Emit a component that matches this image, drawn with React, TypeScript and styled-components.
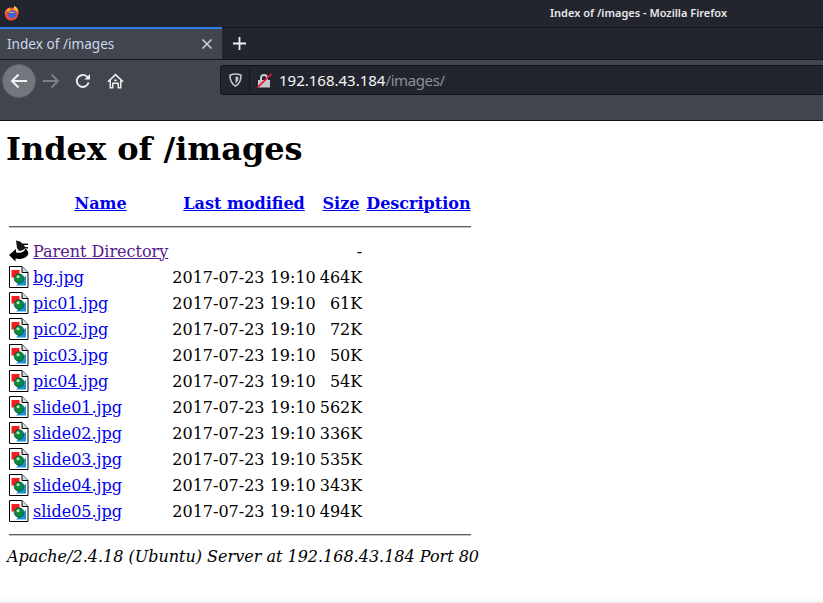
import React from "react";
import styled, { createGlobalStyle } from "styled-components";

const GlobalStyle = createGlobalStyle`
  html, body {
    margin: 0;
    padding: 0;
    height: 100%;
    background: #fff;
  }
  #root {
    height: 100%;
  }
`;

const UI_FONT = `"Noto Sans", "Open Sans", sans-serif`;
const PAGE_FONT = `"DejaVu Serif", serif`;

const Window = styled.div`
  width: 823px;
  height: 603px;
  display: flex;
  flex-direction: column;
  overflow: hidden;
  position: relative;
`;

const TitleBar = styled.div`
  height: 27px;
  background: #23252e;
  display: flex;
  align-items: center;
  padding-left: 4px;
  position: relative;
  flex: none;
`;

const WindowTitle = styled.div`
  position: absolute;
  left: 550px;
  top: 5px;
  font: 600 11px/16px ${UI_FONT};
  color: #e8e8ea;
  white-space: nowrap;
`;

const TabStrip = styled.div`
  height: 33px;
  background: #23252e;
  display: flex;
  flex: none;
  border-bottom: 1px solid #14151a;
  box-sizing: border-box;
  border-top: 1px solid #14151a;
`;

const ActiveTab = styled.div`
  width: 222px;
  height: 32px;
  margin-top: -1px;
  background: #42454e;
  border-top: 2px solid #2d7be8;
  box-sizing: border-box;
  display: flex;
  align-items: center;
  justify-content: space-between;
  padding: 0 9px 0 7px;
  font: 400 13.6px/20px ${UI_FONT};
  color: #c9d8ea;
  z-index: 1;
`;

const NewTab = styled.div`
  width: 34px;
  display: flex;
  align-items: center;
  justify-content: center;
`;

const NavBar = styled.div`
  height: 61px;
  background: #42454e;
  border-bottom: 1px solid #101114;
  box-sizing: border-box;
  flex: none;
  display: flex;
  align-items: flex-start;
  padding: 4px 0 0 2px;
`;

const NavButton = styled.div<{ $active?: boolean }>`
  width: 32px;
  height: 32px;
  border-radius: 50%;
  background: ${(p) => (p.$active ? "#73767c" : "transparent")};
  border: 1px solid ${(p) => (p.$active ? "#5c5f66" : "transparent")};
  display: flex;
  align-items: center;
  justify-content: center;
  margin-right: -2px;
`;

const UrlBar = styled.div`
  margin-left: 90px;
  margin-top: 1px;
  flex: 1;
  height: 30px;
  background: #23252e;
  border: 1px solid #14151a;
  border-right: none;
  border-radius: 4px 0 0 4px;
  box-sizing: border-box;
  display: flex;
  align-items: center;
`;

const ShieldSlot = styled.div`
  width: 28px;
  height: 22px;
  display: flex;
  align-items: center;
  justify-content: center;
  border-right: 1px solid #14151a;
`;

const LockSlot = styled.div`
  width: 29px;
  display: flex;
  align-items: center;
  justify-content: center;
`;

const Url = styled.div`
  font: 400 15px/20px ${UI_FONT};
  color: #f4f5f6;
  white-space: nowrap;
`;

const UrlPath = styled.span`
  color: #8d9097;
  letter-spacing: -0.4px;
`;

const Page = styled.main`
  flex: 1;
  background: #fff;
  color: #000;
  padding: 0 7px;
  font: 400 16px/19px ${PAGE_FONT};
`;

const Heading = styled.h1`
  font: 700 32px/38px ${PAGE_FONT};
  margin: 9px 0 21px -1px;
`;

const Listing = styled.table`
  border-spacing: 2px;
  border-collapse: separate;
  font: inherit;
`;

const HeadCell = styled.th<{ $trim?: number }>`
  padding: 0 ${(p) => p.$trim ?? 0}px 0 0;
  font-weight: 700;
  text-align: center;
  white-space: nowrap;
`;

const RuleCell = styled.th`
  padding: 0;
  font-weight: 400;
  height: 20px;
`;

const Rule = styled.hr`
  margin: 0;
  border: none;
  border-top: 1px solid #5e5e5e;
  border-bottom: 1px solid #c4c4c4;
`;

const Link = styled.a`
  color: #0000ee;
  text-decoration: underline;
`;

const VisitedLink = styled(Link)`
  color: #551a8b;
`;

const Row = styled.tr`
  height: 24px;
`;

const IconCell = styled.td`
  padding: 0;
  width: 20px;
  vertical-align: middle;
  line-height: 0;
`;

const NameCell = styled.td`
  padding: 0 2px 0 2px;
  white-space: nowrap;
`;

const DateCell = styled.td`
  padding: 0 2px 0 0;
  white-space: nowrap;
`;

const SizeCell = styled.td`
  padding: 0 2px 0 0;
  text-align: right;
  white-space: nowrap;
`;

const Address = styled.address`
  font: italic 400 16px/19px ${PAGE_FONT};
`;

const BottomShade = styled.div`
  position: absolute;
  left: 0;
  right: 0;
  bottom: 0;
  height: 5px;
  background: linear-gradient(#ffffff, #eeeeee);
`;

const FirefoxLogo = () => (
  <svg width="15" height="15" viewBox="0 0 15 15">
    <circle cx="7.400" cy="8" r="6.600" fill="#ee4a38" />
    <path d="M.9 8.500C.6 5 3 2.500 5.800 1.600 5.400 3.200 6.800 3.600 8.200 4c1.600-.8 2-2.400 1.800-4 3.400 1.400 5 4.600 4.700 8.500-1-2.800-2.800-4.200-5-4.500L4.500 5.500 2.600 5z" fill="#ff9d2e" />
    <path d="M10 0c2.400 1 3.800 2.800 4.400 5-1-1-2.400-1.600-4-1.400.2-1.200 0-2.400-.4-3.600z" fill="#ffd23e" />
    <circle cx="8" cy="8.200" r="3.900" fill="#3f62e0" />
    <path d="M3.400 5.400c1.800.2 3.800.7 5.600.4l1.600 1c-2 .4-4 .2-5.400-.3z" fill="#ffb13d" />
  </svg>
);

const CloseIcon = () => (
  <svg width="12" height="12" viewBox="0 0 12 12">
    <path d="M1.500 1.500l9 9M10.500 1.500l-9 9" stroke="#d4d5d8" strokeWidth="1.500" />
  </svg>
);

const PlusIcon = () => (
  <svg width="15" height="15" viewBox="0 0 15 15">
    <path d="M7.500 1v13M1 7.500h13" stroke="#f0f0f2" strokeWidth="1.800" />
  </svg>
);

const ArrowLeft = ({ color }: { color: string }) => (
  <svg width="18" height="16" viewBox="0 0 18 16" fill="none">
    <path d="M17 8H2M8.500 1.500L2 8l6.500 6.500" stroke={color} strokeWidth="1.900" />
  </svg>
);

const ArrowRight = ({ color }: { color: string }) => (
  <svg width="18" height="16" viewBox="0 0 18 16" fill="none">
    <path d="M1 8h15M9.500 1.500L16 8l-6.500 6.500" stroke={color} strokeWidth="1.900" />
  </svg>
);

const ReloadIcon = () => (
  <svg width="16" height="16" viewBox="0 0 16 16" fill="none">
    <path d="M13.600 9.500A6 6 0 1 1 12 3.600L14 5.600" stroke="#eeeeef" strokeWidth="1.900" />
    <path d="M15 1v5.600H9.400z" fill="#eeeeef" />
  </svg>
);

const HomeIcon = () => (
  <svg width="17" height="16" viewBox="0 0 17 16">
    <path
      fillRule="evenodd"
      d="M8.500.5L16.600 8.200l-1.100 1.100-1-.9V15.500h-4V11h-4v4.500h-4V8.400l-1 .9L.4 8.200zM4 6.900v7.100h1V10a.6.6 0 0 1 .6-.6h5.800a.6.600 0 0 1 .6.600v4h1V6.900L8.500 2.700zM7.300 6.500h2.400v1.800H7.300z"
      fill="#eeeeef"
    />
  </svg>
);

const ShieldIcon = () => (
  <svg width="13" height="14" viewBox="0 0 13 14">
    <path d="M6.500 1C8.500 1 10.500 1.500 12 2.300 12 7.500 10.500 11 6.500 13 2.500 11 1 7.500 1 2.300 2.500 1.500 4.500 1 6.500 1z" fill="none" stroke="#c5c6c9" strokeWidth="1.600" />
    <path d="M6.500 3.400c1 0 2 .2 3 .6 0 3-.8 5-3 6.400z" fill="#c5c6c9" />
  </svg>
);

const InsecureLockIcon = () => (
  <svg width="15" height="15" viewBox="0 0 15 15">
    <path d="M3 7V5a4 4 0 0 1 8 0v2h2v7.500H1V7z" fill="#c5c6c9" />
    <path d="M5 7V5a2 2 0 0 1 4 0v2z" fill="#23252e" />
    <path d="M.5 14.500L14.500 .8" stroke="#f0133f" strokeWidth="1.600" />
  </svg>
);

const ImageFileIcon = () => (
  <svg width="20" height="22" viewBox="0 0 20 22">
    <path d="M.5.5h12.500l6 6v15H.5z" fill="#fff" stroke="#000" />
    <path d="M13 .5v6h6" fill="#d8d8d8" stroke="#000" />
    <path d="M2.500 4h8v3l-3 4.500h-5z" fill="#f42020" />
    <path d="M7 19.500l10-10v10z" fill="#1a93d0" />
    <circle cx="10" cy="12.500" r="4.800" fill="#0c8a3c" stroke="#033" strokeWidth=".6" />
    <circle cx="9" cy="10.800" r="1.500" fill="#b8ecc8" />
  </svg>
);

const BackIcon = () => (
  <svg width="20" height="22" viewBox="0 0 20 22" overflow="visible">
    <path d="M7 .5l4 1 2.500 2H19V5h-4l1 2h3v1.500h-3c-1.500 1.500-3.500 2.500-6 2.500L8 8z" fill="#161616" />
    <path d="M16 8.500c5 3 4 7.500-1 9.500-3 1.200-6 1-8.500.4V21.500L0 15l7-6v3.500c3.500.6 6 .2 8-1.500.8-.8 1.200-1.600 1-2.500z" fill="#000" />
  </svg>
);

const files = [
  { name: "bg.jpg", size: "464K" },
  { name: "pic01.jpg", size: "61K" },
  { name: "pic02.jpg", size: "72K" },
  { name: "pic03.jpg", size: "50K" },
  { name: "pic04.jpg", size: "54K" },
  { name: "slide01.jpg", size: "562K" },
  { name: "slide02.jpg", size: "336K" },
  { name: "slide03.jpg", size: "535K" },
  { name: "slide04.jpg", size: "343K" },
  { name: "slide05.jpg", size: "494K" },
];

const App = () => {
  return (
    <Window>
      <GlobalStyle />
      <TitleBar>
        <FirefoxLogo />
        <WindowTitle>Index of /images - Mozilla Firefox</WindowTitle>
      </TitleBar>
      <TabStrip>
        <ActiveTab>
          Index of /images
          <CloseIcon />
        </ActiveTab>
        <NewTab>
          <PlusIcon />
        </NewTab>
      </TabStrip>
      <NavBar>
        <NavButton $active>
          <ArrowLeft color="#f2f2f3" />
        </NavButton>
        <NavButton>
          <ArrowRight color="#7d7f85" />
        </NavButton>
        <NavButton>
          <ReloadIcon />
        </NavButton>
        <NavButton>
          <HomeIcon />
        </NavButton>
        <UrlBar>
          <ShieldSlot>
            <ShieldIcon />
          </ShieldSlot>
          <LockSlot>
            <InsecureLockIcon />
          </LockSlot>
          <Url>
            192.168.43.184<UrlPath>/images/</UrlPath>
          </Url>
        </UrlBar>
      </NavBar>
      <Page>
        <Heading>Index of /images</Heading>
        <Listing>
          <tbody>
            <Row>
              <HeadCell />
              <HeadCell><Link href="#">Name</Link></HeadCell>
              <HeadCell $trim={2}><Link href="#">Last modified</Link></HeadCell>
              <HeadCell $trim={2}><Link href="#">Size</Link></HeadCell>
              <HeadCell><Link href="#">Description</Link></HeadCell>
            </Row>
            <tr>
              <RuleCell colSpan={5}><Rule /></RuleCell>
            </tr>
            <Row>
              <IconCell><BackIcon /></IconCell>
              <NameCell><VisitedLink href="#">Parent Directory</VisitedLink></NameCell>
              <DateCell />
              <SizeCell>-</SizeCell>
              <td />
            </Row>
            {files.map((file) => (
              <Row key={file.name}>
                <IconCell><ImageFileIcon /></IconCell>
                <NameCell><Link href="#">{file.name}</Link></NameCell>
                <DateCell>2017-07-23 19:10</DateCell>
                <SizeCell>{file.size}</SizeCell>
                <td />
              </Row>
            ))}
            <tr>
              <RuleCell colSpan={5}><Rule /></RuleCell>
            </tr>
          </tbody>
        </Listing>
        <Address>Apache/2.4.18 (Ubuntu) Server at 192.168.43.184 Port 80</Address>
      </Page>
      <BottomShade />
    </Window>
  );
};

export default App;
